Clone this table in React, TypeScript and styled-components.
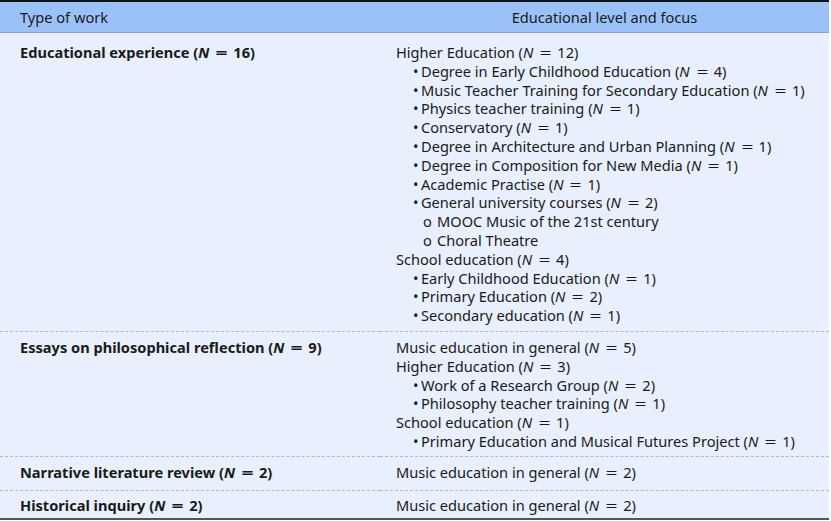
import React from 'react';
import styled, { createGlobalStyle } from 'styled-components';

const GlobalStyle = createGlobalStyle`
  html, body {
    margin: 0;
    padding: 0;
    background: #ffffff;
  }
  body {
    font-family: 'Noto Sans', 'DejaVu Sans', sans-serif;
    color: #1a1a1a;
  }
`;

const Table = styled.table`
  width: 829px;
  border-collapse: collapse;
  background: #e7f0fc;
  font-size: 14.6px;
  line-height: 18.8px;
  border-top: 2px solid #111;
  border-bottom: 2px solid #555;
`;

const HeadCell = styled.th<{ $center?: boolean }>`
  background: #9bc2f8;
  font-weight: normal;
  text-align: ${p => (p.$center ? 'center' : 'left')};
  padding: 6px ${p => (p.$center ? '0' : '20px')} 5px;
  border-bottom: 1px solid #9a9fa8;
  height: 19px;
`;

const Row = styled.tr<{ $last?: boolean }>`
  border-bottom: ${p => (p.$last ? 'none' : '1px dashed #b4b8bf')};
`;

const TypeCell = styled.td<{ $pt: number; $pb: number }>`
  width: 360px;
  padding: ${p => p.$pt}px 0 ${p => p.$pb}px 20px;
  vertical-align: top;
  font-weight: bold;
`;

const LevelCell = styled.td<{ $pt: number; $pb: number }>`
  padding: ${p => p.$pt}px 0 ${p => p.$pb}px 16px;
  vertical-align: top;
`;

const Line = styled.div<{ $depth: number }>`
  padding-left: ${p => [0, 17, 27][p.$depth]}px;
  white-space: nowrap;
`;

const Mark = styled.span<{ $w: number }>`
  display: inline-block;
  width: ${p => p.$w}px;
`;

// the equals sign is set wide, as in typeset math
const Eq = styled.span`
  display: inline-block;
  width: 11px;
  margin: 0 6px 0 7px;
  text-align: center;
  transform: scaleX(1.45);
`;

type Item = [number, string, number?];

const N = ({ n }: { n?: number }) =>
  n === undefined ? null : (
    <>
      {' ('}
      <i>N</i>
      <Eq>=</Eq>
      {`${n})`}
    </>
  );

const rows: { type: string; n: number; pt: number; pb: number; items: Item[] }[] = [
  {
    type: 'Educational experience',
    n: 16,
    pt: 10,
    pb: 6,
    items: [
      [0, 'Higher Education', 12],
      [1, 'Degree in Early Childhood Education', 4],
      [1, 'Music Teacher Training for Secondary Education', 1],
      [1, 'Physics teacher training', 1],
      [1, 'Conservatory', 1],
      [1, 'Degree in Architecture and Urban Planning', 1],
      [1, 'Degree in Composition for New Media', 1],
      [1, 'Academic Practise', 1],
      [1, 'General university courses', 2],
      [2, 'MOOC Music of the 21st century'],
      [2, 'Choral Theatre'],
      [0, 'School education', 4],
      [1, 'Early Childhood Education', 1],
      [1, 'Primary Education', 2],
      [1, 'Secondary education', 1],
    ],
  },
  {
    type: 'Essays on philosophical reflection',
    n: 9,
    pt: 6,
    pb: 5,
    items: [
      [0, 'Music education in general', 5],
      [0, 'Higher Education', 3],
      [1, 'Work of a Research Group', 2],
      [1, 'Philosophy teacher training', 1],
      [0, 'School education', 1],
      [1, 'Primary Education and Musical Futures Project', 1],
    ],
  },
  {
    type: 'Narrative literature review',
    n: 2,
    pt: 6,
    pb: 8,
    items: [[0, 'Music education in general', 2]],
  },
  {
    type: 'Historical inquiry',
    n: 2,
    pt: 5,
    pb: 4,
    items: [[0, 'Music education in general', 2]],
  },
];

const App: React.FC = () => (
  <>
    <GlobalStyle />
    <Table>
      <thead>
        <tr>
          <HeadCell>Type of work</HeadCell>
          <HeadCell $center>Educational level and focus</HeadCell>
        </tr>
      </thead>
      <tbody>
        {rows.map((r, i) => (
          <Row key={r.type} $last={i === rows.length - 1}>
            <TypeCell $pt={r.pt} $pb={r.pb}>
              {r.type}
              <N n={r.n} />
            </TypeCell>
            <LevelCell $pt={r.pt} $pb={r.pb}>
              {r.items.map(([depth, text, n], j) => (
                <Line key={j} $depth={depth}>
                  {depth === 1 && <Mark $w={8}>•</Mark>}
                  {depth === 2 && <Mark $w={14}>o</Mark>}
                  {text}
                  <N n={n} />
                </Line>
              ))}
            </LevelCell>
          </Row>
        ))}
      </tbody>
    </Table>
  </>
);

export default App;
